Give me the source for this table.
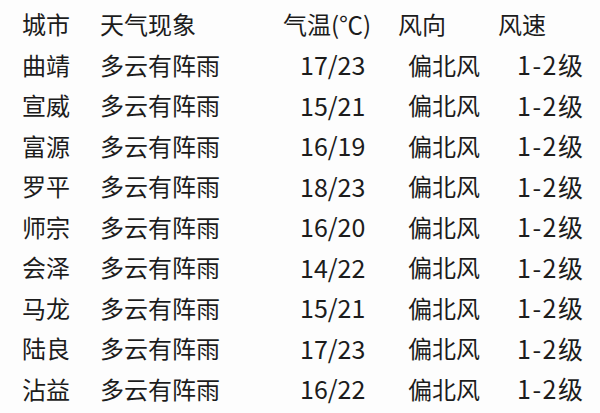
const rows = [
  ["曲靖", "多云有阵雨", "17/23", "偏北风", "1-2级"],
  ["宣威", "多云有阵雨", "15/21", "偏北风", "1-2级"],
  ["富源", "多云有阵雨", "16/19", "偏北风", "1-2级"],
  ["罗平", "多云有阵雨", "18/23", "偏北风", "1-2级"],
  ["师宗", "多云有阵雨", "16/20", "偏北风", "1-2级"],
  ["会泽", "多云有阵雨", "14/22", "偏北风", "1-2级"],
  ["马龙", "多云有阵雨", "15/21", "偏北风", "1-2级"],
  ["陆良", "多云有阵雨", "17/23", "偏北风", "1-2级"],
  ["沾益", "多云有阵雨", "16/22", "偏北风", "1-2级"],
];

const cols = "grid grid-cols-[78px_183px_115px_100px_1fr] items-center h-[40.5px] whitespace-nowrap";

export default function App() {
  return (
    <div
      className="w-[600px] h-[413px] bg-[#fdfdfd] text-[#1c1c1c] text-[24px] leading-none pl-[22px] pt-[4px]"
      style={{ fontFamily: '"Noto Sans CJK SC", "Noto Sans", sans-serif' }}
    >
      <div className={cols}>
        <span>城市</span>
        <span>天气现象</span>
        <span>气温(℃)</span>
        <span>风向</span>
        <span>风速</span>
      </div>
      {rows.map((r, i) => (
        <div key={i} className={cols}>
          <span>{r[0]}</span>
          <span>{r[1]}</span>
          <span className="pl-[17px] text-[25px]">{r[2]}</span>
          <span className="pl-[10px]">{r[3]}</span>
          <span className="pl-[19px] text-[25px] tracking-[1.5px]">{r[4]}</span>
        </div>
      ))}
    </div>
  );
}
